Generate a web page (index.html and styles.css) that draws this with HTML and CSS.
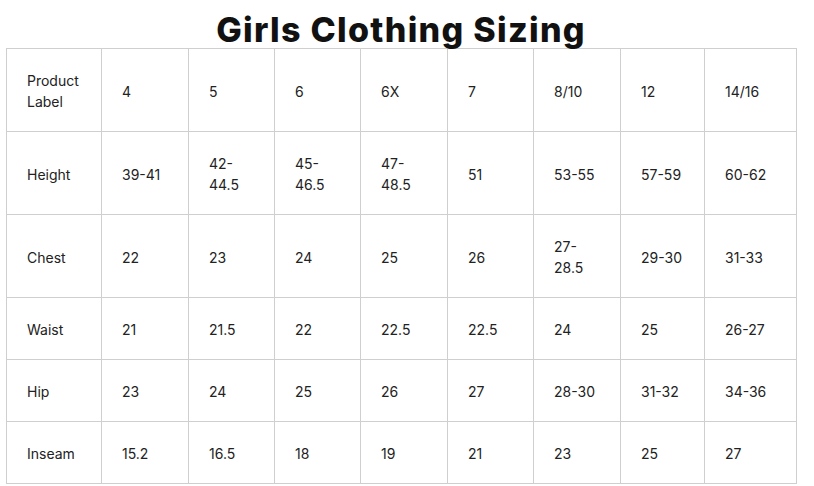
FILE: index.html
```html
<!DOCTYPE html>
<html>
<head>
<meta charset="utf-8">
<link rel="stylesheet" href="styles.css">
</head>
<body>
<h1 class="title">Girls Clothing Sizing</h1>
<table class="sizes">
  <colgroup>
    <col class="c0"><col class="c1"><col class="c2"><col class="c3"><col class="c4"><col class="c5"><col class="c6"><col class="c7"><col class="c8">
  </colgroup>
  <tr class="tall"><td>Product Label</td><td>4</td><td>5</td><td>6</td><td>6X</td><td>7</td><td>8/10</td><td>12</td><td>14/16</td></tr>
  <tr class="tall"><td>Height</td><td>39-41</td><td>42-<br>44.5</td><td>45-<br>46.5</td><td>47-<br>48.5</td><td>51</td><td>53-55</td><td>57-59</td><td>60-62</td></tr>
  <tr class="tall"><td>Chest</td><td>22</td><td>23</td><td>24</td><td>25</td><td>26</td><td>27-<br>28.5</td><td>29-30</td><td>31-33</td></tr>
  <tr class="short"><td>Waist</td><td>21</td><td>21.5</td><td>22</td><td>22.5</td><td>22.5</td><td>24</td><td>25</td><td>26-27</td></tr>
  <tr class="short"><td>Hip</td><td>23</td><td>24</td><td>25</td><td>26</td><td>27</td><td>28-30</td><td>31-32</td><td>34-36</td></tr>
  <tr class="short"><td>Inseam</td><td>15.2</td><td>16.5</td><td>18</td><td>19</td><td>21</td><td>23</td><td>25</td><td>27</td></tr>
</table>
</body>
</html>
```
FILE: styles.css
```css
html, body {
  margin: 0;
  padding: 0;
  background: #fff;
}
body {
  font-family: Inter, "Noto Sans", sans-serif;
  color: #222;
}
.title {
  margin: 0;
  width: 802px;
  box-sizing: border-box;
  padding-top: 12px;
  text-align: center;
  font-family: Inter, sans-serif;
  font-weight: 800;
  font-size: 34px;
  line-height: 36px;
  height: 48px;
  color: #111;
  letter-spacing: 1.3px;
  position: relative;
  z-index: 1;
}
.sizes {
  margin-left: 6px;
  border-collapse: collapse;
  table-layout: fixed;
  width: 790px;
}
.sizes td {
  border: 1px solid #cfcfcf;
  padding: 2px 10px 0 20px;
  font-size: 14px;
  line-height: 21px;
  vertical-align: middle;
  text-align: left;
  color: #222;
}
.tall td { height: 80px; }
.short td { height: 59px; }
.c0 { width: 95px; }
.c1 { width: 87px; }
.c2 { width: 86px; }
.c3 { width: 86px; }
.c4 { width: 87px; }
.c5 { width: 86px; }
.c6 { width: 87px; }
.c7 { width: 84px; }
.c8 { width: 92px; }
```
